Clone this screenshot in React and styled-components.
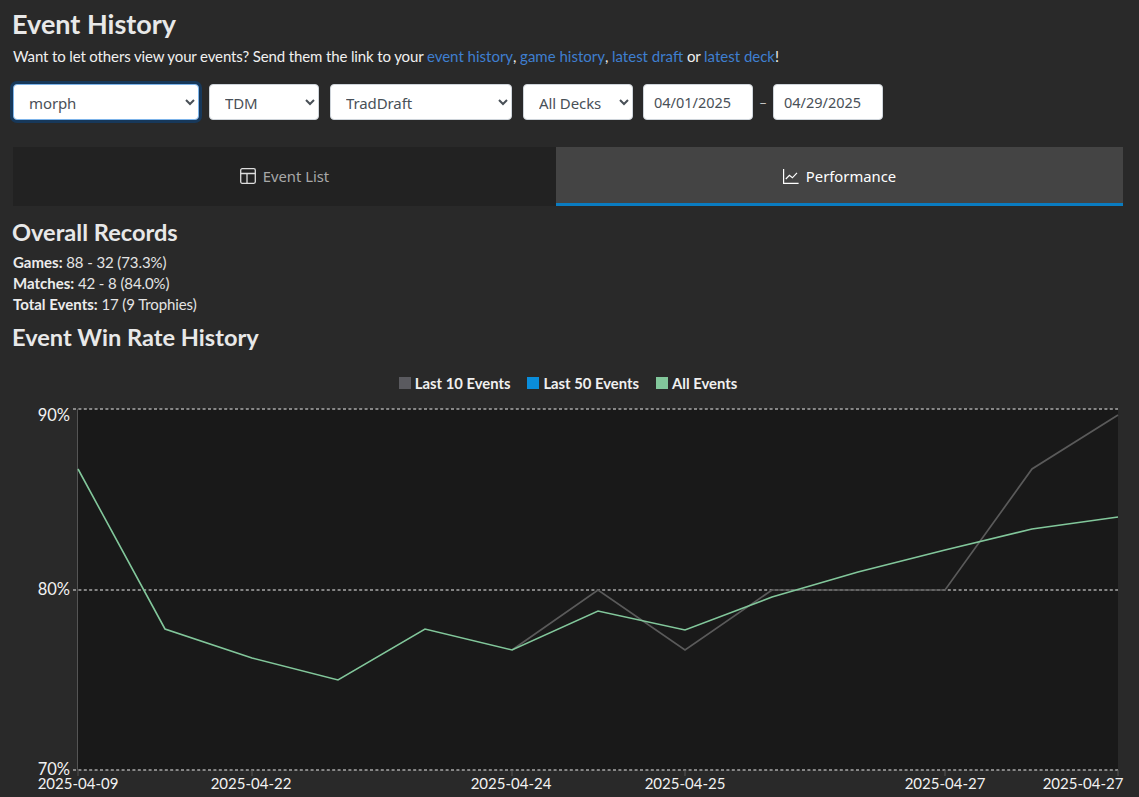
import React from "react";
import styled, { createGlobalStyle } from "styled-components";

const GlobalStyle = createGlobalStyle`
  html, body {
    margin: 0;
    height: 100%;
    overflow: hidden;
    background: #292929;
  }
  body {
    color: #e8e8e8;
    font-family: Lato, "Open Sans", sans-serif;
  }
`;

const Page = styled.div`
  padding: 8px 16px 0 13px;
`;

const Title = styled.h1`
  margin: 0 0 0 -1px;
  font-size: 27px;
  line-height: 32px;
  font-weight: 700;
`;

const Intro = styled.p`
  margin: 7px 0 0;
  font-size: 15px;
  line-height: 18px;
  letter-spacing: -0.13px;
  color: #f0f0f0;
`;

const Anchor = styled.a`
  color: #3f7fd0;
  text-decoration: none;
  letter-spacing: 0;
`;

const Filters = styled.div`
  display: flex;
  align-items: center;
  margin-top: 19px;
`;

const Select = styled.select`
  box-sizing: border-box;
  width: ${(p) => p.$width}px;
  height: 36px;
  margin-right: ${(p) => p.$gap}px;
  padding: 2px 8px 0 11px;
  background-color: #fff;
  color: #495057;
  border: 1px solid ${(p) => (p.$focused ? "#7db4ea" : "#ced4da")};
  border-radius: 4px;
  font-family: "Noto Sans", sans-serif;
  font-size: 15px;
  letter-spacing: -0.1px;
  box-shadow: ${(p) => (p.$focused ? "0 0 0 3px #17385a" : "none")};
  outline: none;
`;

const DateInput = styled.input`
  box-sizing: border-box;
  width: 110px;
  height: 36px;
  padding: 0 10px;
  background: #fff;
  color: #495057;
  border: 1px solid #ced4da;
  border-radius: 4px;
  font-family: "Noto Sans", sans-serif;
  font-size: 14.5px;
  outline: none;
`;

const Dash = styled.span`
  width: 20px;
  text-align: center;
  font-size: 14px;
  color: #cfcfcf;
`;

const Tabs = styled.div`
  display: grid;
  grid-template-columns: 543px 567px;
  margin-top: 27px;
  height: 59px;
`;

const Tab = styled.div`
  display: flex;
  align-items: center;
  justify-content: center;
  gap: 7px;
  box-sizing: border-box;
  background: ${(p) => (p.$active ? "#444444" : "#222222")};
  color: ${(p) => (p.$active ? "#ffffff" : "#a8a8a8")};
  border-bottom: 3px solid ${(p) => (p.$active ? "#0a7cc1" : "#222222")};
  font-family: "Noto Sans", sans-serif;
  font-size: 14.8px;
  padding-top: 1px;

  svg {
    color: ${(p) => (p.$active ? "#ffffff" : "#dddddd")};
  }
`;

const SectionTitle = styled.h2`
  margin: ${(p) => p.$top}px 0 0 -1px;
  font-size: 23.6px;
  line-height: 28px;
  font-weight: 700;
`;

const Stats = styled.div`
  margin-top: 6px;
  font-size: 15px;
  line-height: 21px;
`;

const Stat = styled.div`
  color: #e4e4e4;
  letter-spacing: -0.1px;

  b {
    font-weight: 700;
    color: #ececec;
    letter-spacing: 0;
  }
`;

const Legend = styled.div`
  display: flex;
  justify-content: center;
  gap: 17px;
  margin-top: 22px;
  height: 20px;
  align-items: center;
  font-size: 14.8px;
  font-weight: 700;
  color: #f0f0f0;
`;

const LegendItem = styled.div`
  display: flex;
  align-items: center;
  gap: 4px;
`;

const Swatch = styled.span`
  width: 12px;
  height: 12px;
  background: ${(p) => p.$color};
`;

const ChartSvg = styled.svg`
  display: block;
  margin-left: -13px;
  overflow: visible;
`;

const AxisLabel = styled.text`
  fill: #f2f2f2;
  font-family: Lato, sans-serif;
  font-size: ${(p) => p.$size}px;
`;

const TableIcon = () => (
  <svg width="16" height="16" viewBox="0 0 16 16" fill="none" stroke="currentColor" strokeWidth="1.3">
    <rect x="0.7" y="0.7" width="14.6" height="14.6" rx="1.5" />
    <path d="M0.7 5.5h14.6M7 5.5v9.8" />
  </svg>
);

const LineIcon = () => (
  <svg width="16" height="16" viewBox="0 0 16 16" fill="none" stroke="currentColor" strokeWidth="1.2">
    <path d="M0.6 1v14.4h15" />
    <path d="M2.8 11l3.6-3.6 3 2.4 4.6-5" />
  </svg>
);

const xs = [78, 165, 252, 338, 425, 512, 598, 685, 772, 858, 945, 1032, 1118];
const allEvents = [469, 629, 658, 680, 629, 650, 611, 630, 597, 572, 550, 529, 517];
const last10 = [null, null, null, null, null, 650, 590, 650, 590, 590, 590, 469, 415];
const gridLines = [
  { label: "90%", y: 409, baseline: 421 },
  { label: "80%", y: 590, baseline: 595 },
  { label: "70%", y: 770, baseline: 775 },
];
const dateTicks = [
  { label: "2025-04-09", x: 78, labelX: 78 },
  { label: "2025-04-22", x: 252, labelX: 251 },
  { label: "2025-04-24", x: 512, labelX: 511 },
  { label: "2025-04-25", x: 685, labelX: 685 },
  { label: "2025-04-27", x: 945, labelX: 945 },
  { label: "2025-04-27", x: 1118, labelX: 1083 },
];

const toPoints = (ys) =>
  ys
    .map((y, i) => (y === null ? null : `${xs[i]},${y}`))
    .filter(Boolean)
    .join(" ");

const Chart = () => (
  <ChartSvg width="1139" height="404" viewBox="0 393 1139 404">
    <rect x="78" y="409" width="1040" height="361" fill="#191919" />
    <line x1="77.5" y1="409" x2="77.5" y2="770" stroke="#555" />
    {gridLines.map(({ label, y, baseline }) => (
      <g key={label}>
        <line x1="73" y1={y} x2="1118" y2={y} stroke="#a8a8a8" strokeWidth="1.6" strokeDasharray="3 2.4" />
        <AxisLabel x="70" y={baseline} $size={16.5} textAnchor="end">
          {label}
        </AxisLabel>
      </g>
    ))}
    {dateTicks.map(({ label, x, labelX }) => (
      <g key={x}>
        <line x1={x} y1="770" x2={x} y2="776" stroke="#555" />
        <AxisLabel x={labelX} y="789" $size={15} textAnchor="middle">
          {label}
        </AxisLabel>
      </g>
    ))}
    <polyline points={toPoints(last10)} fill="none" stroke="#5a5a5a" strokeWidth="1.7" />
    <polyline points={toPoints(allEvents)} fill="none" stroke="#82c79b" strokeWidth="1.6" />
  </ChartSvg>
);

export default function App() {
  return (
    <>
      <GlobalStyle />
      <Page>
        <Title>Event History</Title>
        <Intro>
          Want to let others view your events? Send them the link to your{" "}
          <Anchor href="#">event history</Anchor>, <Anchor href="#">game history</Anchor>,{" "}
          <Anchor href="#">latest draft</Anchor> or <Anchor href="#">latest deck</Anchor>!
        </Intro>
        <Filters>
          <Select $width={186} $gap={10} $focused defaultValue="morph">
            <option>morph</option>
          </Select>
          <Select $width={110} $gap={11} defaultValue="TDM">
            <option>TDM</option>
          </Select>
          <Select $width={182} $gap={11} defaultValue="TradDraft">
            <option>TradDraft</option>
          </Select>
          <Select $width={110} $gap={10} defaultValue="All Decks">
            <option>All Decks</option>
          </Select>
          <DateInput readOnly value="04/01/2025" />
          <Dash>–</Dash>
          <DateInput readOnly value="04/29/2025" />
        </Filters>
        <Tabs>
          <Tab>
            <TableIcon />
            Event List
          </Tab>
          <Tab $active>
            <LineIcon />
            Performance
          </Tab>
        </Tabs>
        <SectionTitle $top={12}>Overall Records</SectionTitle>
        <Stats>
          <Stat>
            <b>Games:</b> 88 - 32 (73.3%)
          </Stat>
          <Stat>
            <b>Matches:</b> 42 - 8 (84.0%)
          </Stat>
          <Stat>
            <b>Total Events:</b> 17 (9 Trophies)
          </Stat>
        </Stats>
        <SectionTitle $top={8}>Event Win Rate History</SectionTitle>
        <Legend>
          <LegendItem>
            <Swatch $color="#5a5a5f" />
            Last 10 Events
          </LegendItem>
          <LegendItem>
            <Swatch $color="#0a8ddb" />
            Last 50 Events
          </LegendItem>
          <LegendItem>
            <Swatch $color="#82c79b" />
            All Events
          </LegendItem>
        </Legend>
        <Chart />
      </Page>
    </>
  );
}
